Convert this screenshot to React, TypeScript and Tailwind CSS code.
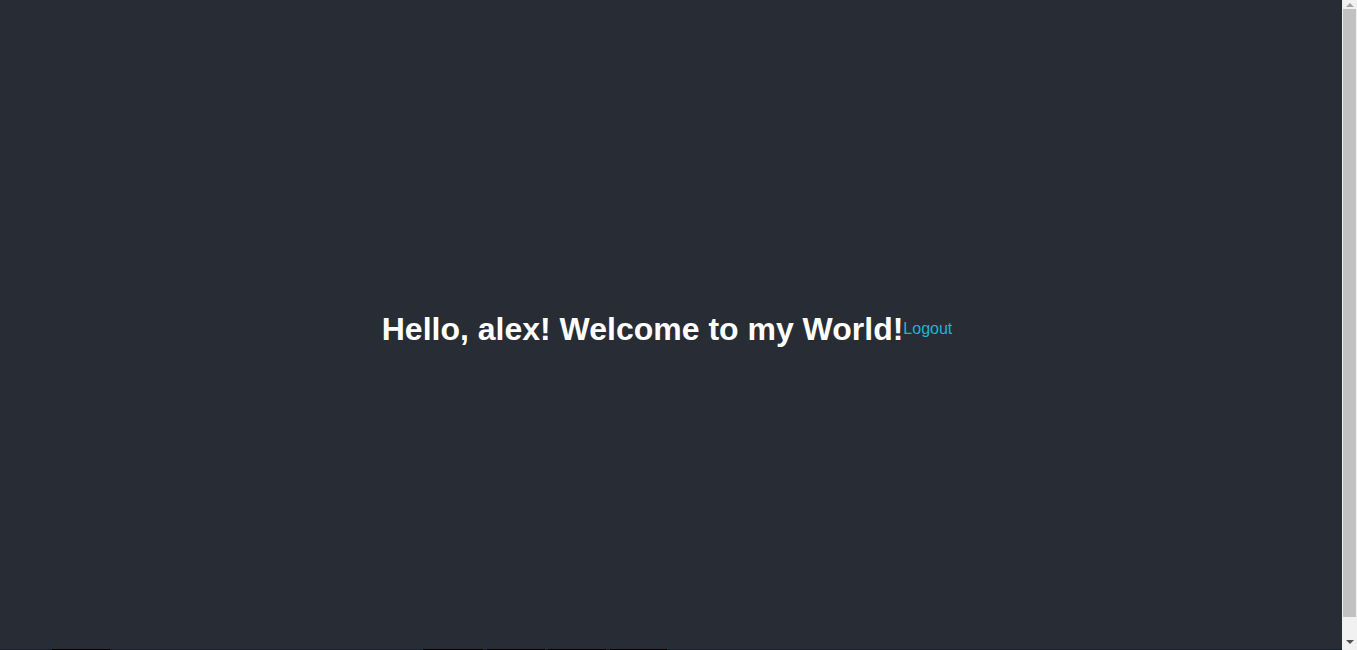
const edgeMarks = [
  { left: 52, width: 58 },
  { left: 423, width: 60 },
  { left: 487, width: 58 },
  { left: 548, width: 58 },
  { left: 610, width: 57 },
];

function ScrollBar() {
  return (
    <div className="w-[15px] h-[650px] bg-[#f1f1f1] flex flex-col items-center">
      <div className="h-[9px] flex items-center justify-center">
        <div className="w-0 h-0 border-x-[4px] border-x-transparent border-b-[4px] border-b-[#a3a3a3]" />
      </div>
      <div className="w-[13px] h-[608px] bg-[#c1c1c1]" />
      <div className="flex-1 flex items-end justify-center pb-[6px]">
        <div className="w-0 h-0 border-x-[4px] border-x-transparent border-t-[4px] border-t-[#505050]" />
      </div>
    </div>
  );
}

export default function App() {
  return (
    <div className="flex flex-row h-[650px] overflow-hidden font-['Liberation_Sans',Arial,sans-serif]">
      <div className="flex-1 flex flex-col">
        <header className="flex-1 bg-[#282c34] flex flex-row items-center justify-center pt-[8px] pr-[8px] text-white">
          <h1 className="text-[32px] font-bold leading-none">Hello, alex! Welcome to my World!</h1>
          <a href="#" className="text-[16px] text-[#1fb4d6] leading-none">
            Logout
          </a>
        </header>
        <div className="h-px bg-[#16202b] flex flex-row">
          {edgeMarks.map((m, i) => (
            <div
              key={i}
              className="h-px bg-black"
              style={{ marginLeft: i === 0 ? m.left : m.left - edgeMarks[i - 1].left - edgeMarks[i - 1].width, width: m.width }}
            />
          ))}
        </div>
      </div>
      <ScrollBar />
    </div>
  );
}
